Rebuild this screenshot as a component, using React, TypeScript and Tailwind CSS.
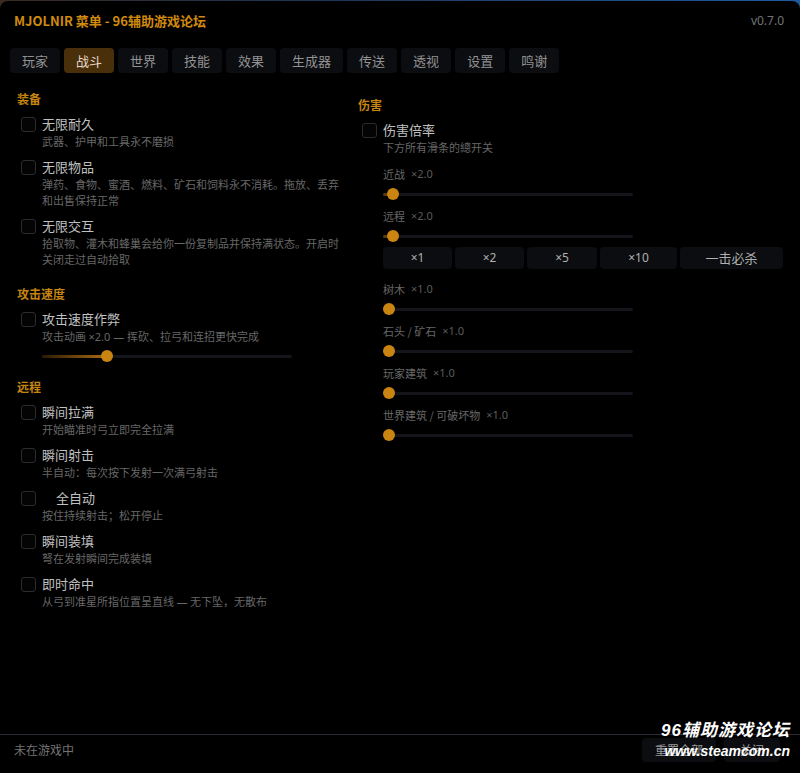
import React from "react";

const tabs = ["玩家", "战斗", "世界", "技能", "效果", "生成器", "传送", "透视", "设置", "鸣谢"];

function Check() {
  return (
    <div className="mt-[2px] h-[15px] w-[15px] shrink-0 rounded-[3px] border border-[#2a2a30] bg-[#040404]" />
  );
}

function Item({ label, desc, indent = false, children }: { label: string; desc: React.ReactNode[]; indent?: boolean; children?: React.ReactNode }) {
  return (
    <div className="flex gap-[6px] pl-[4px]">
      <Check />
      <div className="flex flex-col">
        <div className={`h-[18px] text-[13px] leading-[18px] text-[#c0c0c0] ${indent ? "pl-[14px]" : ""}`}>{label}</div>
        {desc.map((d, i) => (
          <div key={i} className="text-[11px] leading-[16px] text-[#676767] whitespace-nowrap">
            {d}
          </div>
        ))}
        {children}
      </div>
    </div>
  );
}

function Header({ children }: { children: React.ReactNode }) {
  return <div className="mb-[8px] h-[16px] text-[12px] font-semibold leading-[16px] text-[#c58510]">{children}</div>;
}

function Slider({ pos, fill }: { pos: number; fill?: "grad" | "small" | "none" }) {
  return (
    <div className="relative h-[12px] w-[250px]">
      <div className="absolute left-0 right-0 top-[5px] h-[3px] rounded-full bg-[#14151a]" />
      {fill === "grad" && (
        <div className="absolute left-0 top-[5px] h-[3px] rounded-full bg-[linear-gradient(90deg,#2a1a06,#a86c12)]" style={{ width: pos }} />
      )}
      {fill === "small" && (
        <div className="absolute left-0 top-[5px] h-[3px] rounded-full bg-[#5a3a0a]" style={{ width: pos }} />
      )}
      <div className="absolute top-0 h-[12px] w-[12px] rounded-full bg-[#c98412]" style={{ left: pos - 6 }} />
    </div>
  );
}

const latin = "font-['Noto_Sans','Liberation_Sans',sans-serif]";

function SliderBlock({ label, value, pos, fill }: { label: string; value: string; pos: number; fill?: "grad" | "small" | "none" }) {
  return (
    <div className="flex flex-col">
      <div className="flex h-[16px] items-center gap-[6px] text-[11px] leading-[16px] text-[#676767]">
        <span>{label}</span>
        <span className={`${latin} text-[#5c5c5c]`}>{value}</span>
      </div>
      <div className="mt-[2px] flex h-[20px] items-center">
        <Slider pos={pos} fill={fill} />
      </div>
    </div>
  );
}

export default function App() {
  return (
    <div className="relative h-[773px] w-[800px] overflow-hidden bg-[linear-gradient(90deg,#3b2a22_0%,#1f3350_35%,#1e5ba0_100%)] font-['Noto_Sans_CJK_SC','Noto_Sans',sans-serif]">
      <div className="mt-[1px] flex h-[772px] flex-col rounded-t-[8px] bg-black">
        {/* title */}
        <div className="mt-[11px] flex h-[18px] items-center justify-between px-[14px]">
          <div className="text-[13px] font-semibold leading-[18px] text-[#d08a0e]">MJOLNIR 菜单 - 96辅助游戏论坛</div>
          <div className={`${latin} pr-[2px] text-[12px] leading-[18px] text-[#747474]`}>v0.7.0</div>
        </div>
        {/* tabs */}
        <div className="mt-[18px] flex gap-[4px] px-[10px]">
          {tabs.map((t) => (
            <div
              key={t}
              className={`flex h-[25px] items-center justify-center rounded-[4px] px-[12px] text-[13px] ${
                t === "战斗" ? "bg-[#4a2f0b] text-[#e6dccb]" : "bg-[#0c0d11] text-[#929292]"
              }`}
            >
              {t}
            </div>
          ))}
        </div>

        {/* content */}
        <div className="flex flex-1 pt-[18px]">
          {/* left */}
          <div className="flex w-[358px] shrink-0 flex-col pl-[17px]">
            <div className="flex flex-col">
              <Header>装备</Header>
              <div className="flex flex-col gap-[9px]">
                <Item label="无限耐久" desc={["武器、护甲和工具永不磨损"]} />
                <Item label="无限物品" desc={["弹药、食物、蜜酒、燃料、矿石和饲料永不消耗。拖放、丢弃", "和出售保持正常"]} />
                <Item label="无限交互" desc={["拾取物、灌木和蜂巢会给你一份复制品并保持满状态。开启时", "关闭走过自动拾取"]} />
              </div>
            </div>
            <div className="mt-[19px] flex flex-col">
              <Header>攻击速度</Header>
              <Item
                label="攻击速度作弊"
                desc={[
                  <span key="a">
                    攻击动画 <span className={latin}>×2.0 — </span>挥砍、拉弓和连招更快完成
                  </span>,
                ]}
              >
                <div className="mt-[5px]">
                  <Slider pos={65} fill="grad" />
                </div>
              </Item>
            </div>
            <div className="mt-[17px] flex flex-col">
              <Header>远程</Header>
              <div className="flex flex-col gap-[9px]">
                <Item label="瞬间拉满" desc={["开始瞄准时弓立即完全拉满"]} />
                <Item label="瞬间射击" desc={["半自动：每次按下发射一次满弓射击"]} />
                <Item label="全自动" indent desc={["按住持续射击；松开停止"]} />
                <Item label="瞬间装填" desc={["弩在发射瞬间完成装填"]} />
                <Item
                  label="即时命中"
                  desc={[
                    <span key="b">
                      从弓到准星所指位置呈直线 <span className={latin}>—</span> 无下坠，无散布
                    </span>,
                  ]}
                />
              </div>
            </div>
          </div>

          {/* right */}
          <div className="mt-[6px] flex flex-1 flex-col pr-[18px]">
            <Header>伤害</Header>
            <Item label="伤害倍率" desc={["下方所有滑条的總开关"]}>
              <div className="mt-[11px] flex flex-col gap-[4px]">
                <SliderBlock label="近战" value="×2.0" pos={10} fill="small" />
                <SliderBlock label="远程" value="×2.0" pos={10} fill="small" />
              </div>
              <div className="mt-[1px] flex w-[400px] gap-[3px] text-[12px] text-[#b0b0b0]">
                <div className={`${latin} flex h-[22px] w-[69px] items-center justify-center rounded-[4px] bg-[#0c0d11]`}>×1</div>
                <div className={`${latin} flex h-[22px] w-[69px] items-center justify-center rounded-[4px] bg-[#0c0d11]`}>×2</div>
                <div className={`${latin} flex h-[22px] w-[70px] items-center justify-center rounded-[4px] bg-[#0c0d11]`}>×5</div>
                <div className={`${latin} flex h-[22px] w-[77px] items-center justify-center rounded-[4px] bg-[#0c0d11]`}>×10</div>
                <div className="flex h-[22px] flex-1 items-center justify-center rounded-[4px] bg-[#0c0d11] text-[13px]">一击必杀</div>
              </div>
              <div className="mt-[12px] flex flex-col gap-[4px]">
                <SliderBlock label="树木" value="×1.0" pos={6} />
                <SliderBlock label="石头 / 矿石" value="×1.0" pos={6} />
                <SliderBlock label="玩家建筑" value="×1.0" pos={6} />
                <SliderBlock label="世界建筑 / 可破坏物" value="×1.0" pos={6} />
              </div>
            </Item>
          </div>
        </div>

        {/* footer */}
        <div className="flex h-[39px] items-start justify-between border-t border-[#2b2937] px-[14px] pt-[3px]">
          <div className="flex h-[24px] items-center text-[12px] text-[#747474]">未在游戏中</div>
          <div className="flex gap-[8px] pr-[6px]">
            <div className="flex h-[24px] w-[74px] items-center justify-center rounded-[4px] bg-[#0c0d11] text-[12px] text-[#9a9a9a]">重置全部</div>
            <div className="flex h-[24px] w-[56px] items-center justify-center rounded-[4px] bg-[#0c0d11] text-[12px] text-[#9a9a9a]">关闭</div>
          </div>
        </div>
      </div>

      {/* watermark */}
      <div className="pointer-events-none absolute right-[10px] top-[720px] flex flex-col items-end font-['Liberation_Sans','Noto_Sans_CJK_SC',sans-serif] italic">
        <div className="text-[17px] font-bold leading-[22px] tracking-[1px] text-white">96辅助游戏论坛</div>
        <div className="text-[14px] font-bold leading-[18px] text-white">www.steamcom.cn</div>
      </div>
    </div>
  );
}
